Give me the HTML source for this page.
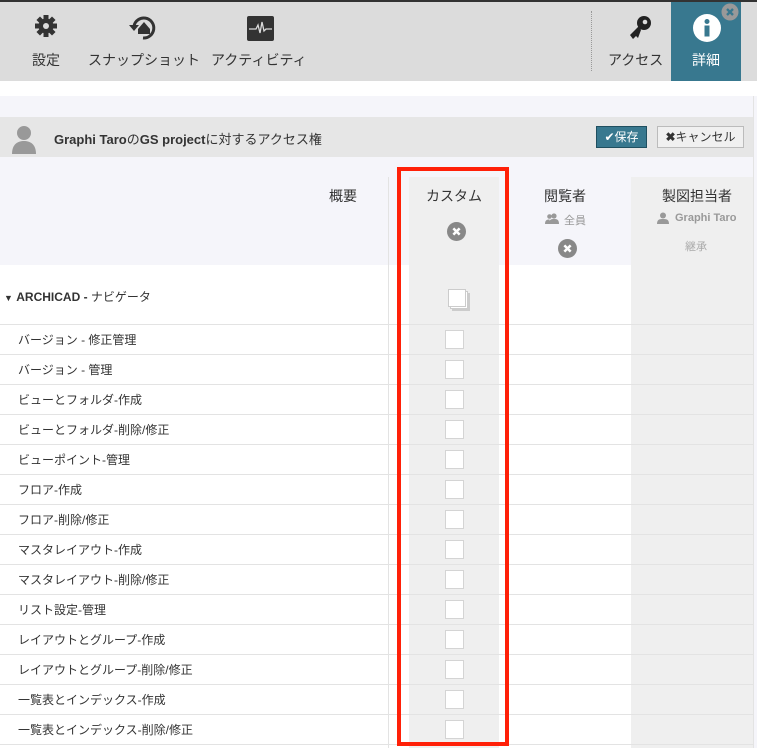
<!DOCTYPE html>
<html><head><meta charset="utf-8"><style>
*{margin:0;padding:0;box-sizing:border-box}
body{width:757px;height:748px;overflow:hidden;background:#fff;font-family:"Liberation Sans","Noto Sans CJK JP",sans-serif;position:relative;color:#333}
.a{position:absolute}
.tb{left:0;top:0;width:757px;height:81px;background:#dcdcdc;border-top:2px solid #333}
.lbl{font-size:14px;color:#333;top:50px;white-space:nowrap}
.row{left:0;width:753px;height:30px;border-bottom:1px solid #e3e3e3}
.row span{position:absolute;left:18px;top:6px;font-size:12px;color:#333}
.cb{position:absolute;left:445px;top:5px;width:19px;height:19px;background:#fff;border:1px solid #d4d4d4}
</style></head><body>
<div class="a tb"></div>
<svg class="a" style="left:34px;top:14px" width="24" height="24" viewBox="0 0 24 24"><g fill="#333"><circle cx="12" cy="12" r="7.5"/><g id="t"><rect x="9.5" y="1" width="5" height="5"/><rect x="9.5" y="18" width="5" height="5"/></g><use href="#t" transform="rotate(45 12 12)"/><use href="#t" transform="rotate(90 12 12)"/><use href="#t" transform="rotate(135 12 12)"/></g><circle cx="12" cy="12" r="3" fill="#dcdcdc"/></svg>
<div class="a lbl" style="left:32px">設定</div>
<svg class="a" style="left:128px;top:12px" width="32" height="32" viewBox="0 0 32 32"><path d="M6 14 A10 10 0 1 1 15 26" fill="none" stroke="#333" stroke-width="3"/><path d="M1 13 L11 13 L6 19Z" fill="#333"/><path d="M10 17 L16 10 L22 17 L22 22 L10 22Z" fill="#333"/></svg>
<div class="a lbl" style="left:88px">スナップショット</div>
<svg class="a" style="left:247px;top:16px" width="27" height="25" viewBox="0 0 27 25"><rect width="27" height="25" rx="2" fill="#333"/><path d="M2 13 H9 L11 9 L13 17 L15 6 L17 15 L19 13 H25" fill="none" stroke="#dcdcdc" stroke-width="1.3"/></svg>
<div class="a lbl" style="left:211px">アクティビティ</div>
<div class="a" style="left:591px;top:11px;height:60px;border-left:1px dotted #999"></div>
<svg class="a" style="left:624px;top:14px" width="30" height="30" viewBox="0 0 30 30"><circle cx="20" cy="9" r="7" fill="#222"/><circle cx="21" cy="8" r="2.3" fill="#dcdcdc"/><path d="M15 12 L6 21 L9 25 L12 22 L14 24 L17 16Z" fill="#222"/></svg>
<div class="a lbl" style="left:608px">アクセス</div>
<div class="a" style="left:671px;top:2px;width:70px;height:79px;background:#38788f"></div>
<svg class="a" style="left:692px;top:13px" width="30" height="30" viewBox="0 0 30 30"><circle cx="15" cy="15" r="14" fill="#fff"/><circle cx="15" cy="8.5" r="2.5" fill="#38788f"/><rect x="12.5" y="12.5" width="5" height="11" fill="#38788f"/></svg>
<div class="a lbl" style="left:692px;color:#fff">詳細</div>
<svg class="a" style="left:721px;top:3px" width="18" height="18" viewBox="0 0 18 18"><circle cx="9" cy="9" r="8.5" fill="#999"/><path d="M6 6 L12 12 M12 6 L6 12" stroke="#38788f" stroke-width="2.4"/></svg>
<div class="a" style="left:0;top:96px;width:753px;height:21px;background:#f5f5fa"></div>
<div class="a" style="left:0;top:117px;width:753px;height:40px;background:#e6e6e6"></div>
<svg class="a" style="left:10px;top:124px" width="28" height="30" viewBox="0 0 28 30"><circle cx="14" cy="9" r="7" fill="#999"/><path d="M2 30 C2 20 8 17 14 17 C20 17 26 20 26 30Z" fill="#999"/></svg>
<div class="a" style="left:54px;top:129px;font-size:13px;color:#333"><b>Graphi Taro</b>の<b>GS project</b>に対するアクセス権</div>
<div class="a" style="left:596px;top:126px;width:51px;height:22px;background:#38788f;border:1px solid #1f4f60;color:#fff;font-size:12px;line-height:20px;text-align:center">✔保存</div>
<div class="a" style="left:657px;top:126px;width:87px;height:22px;background:#f0f0f0;border:1px solid #bbb;color:#333;font-size:12px;line-height:20px;text-align:center"><b>✖</b>キャンセル</div>
<div class="a" style="left:0;top:157px;width:753px;height:108px;background:#f5f5fa"></div>
<div class="a" style="left:409px;top:177px;width:90px;height:571px;background:#efefef"></div>
<div class="a" style="left:631px;top:177px;width:122px;height:571px;background:#efefef"></div>
<div class="a" style="left:388px;top:177px;height:571px;border-left:1px solid #e3e3e3"></div>
<div class="a" style="left:753px;top:96px;width:4px;height:652px;background:#f5f5fa;border-left:1px solid #e3e3e3"></div>
<div class="a" style="left:329px;top:186px;font-size:14px">概要</div>
<div class="a" style="left:426px;top:186px;font-size:14px">カスタム</div>
<svg class="a" style="left:447px;top:222px" width="19" height="19" viewBox="0 0 18 18"><circle cx="9" cy="9" r="9" fill="#888"/><path d="M6 6 L12 12 M12 6 L6 12" stroke="#fff" stroke-width="2.4"/></svg>
<div class="a" style="left:544px;top:186px;font-size:14px">閲覧者</div>
<svg class="a" style="left:545px;top:213px" width="14" height="11" viewBox="0 0 14 11"><circle cx="9" cy="3" r="2.6" fill="#999"/><path d="M4 11 C4 6.5 6 6 9 6 C12 6 14 6.5 14 11Z" fill="#999"/><circle cx="4.5" cy="3.5" r="2.3" fill="#999"/><path d="M0 11 C0 7 2 6.5 4.5 6.5 L5 11Z" fill="#999"/></svg>
<div class="a" style="left:564px;top:212px;font-size:11px;color:#999">全員</div>
<svg class="a" style="left:558px;top:239px" width="19" height="19" viewBox="0 0 18 18"><circle cx="9" cy="9" r="9" fill="#888"/><path d="M6 6 L12 12 M12 6 L6 12" stroke="#fff" stroke-width="2.4"/></svg>
<div class="a" style="left:662px;top:186px;font-size:14px">製図担当者</div>
<svg class="a" style="left:657px;top:212px" width="12" height="12" viewBox="0 0 12 12"><circle cx="6" cy="3.5" r="3" fill="#999"/><path d="M0 12 C0 7 3 7 6 7 C9 7 12 7 12 12Z" fill="#999"/></svg>
<div class="a" style="left:675px;top:212px;font-size:11px;color:#999;font-weight:bold">Graphi Taro</div>
<div class="a" style="left:685px;top:238px;font-size:11px;color:#aaa">継承</div>
<div class="a row" style="top:265px;height:60px"><span style="left:4px;top:23px"><span style="position:static;font-size:9px">▼</span> <b>ARCHICAD -</b> ナビゲータ</span>
<div class="a" style="left:448px;top:24px;width:18px;height:18px;border:1px solid #ccc;background:#fff;box-shadow:2px 2px 0 -1px #fff,2px 2px 0 0 #ccc,3px 3px 0 -1px #fff,4px 4px 0 0 #ccc"></div></div>
<div class="a row" style="top:325px"><span>バージョン - 修正管理</span><i class="cb"></i></div>
<div class="a row" style="top:355px"><span>バージョン - 管理</span><i class="cb"></i></div>
<div class="a row" style="top:385px"><span>ビューとフォルダ-作成</span><i class="cb"></i></div>
<div class="a row" style="top:415px"><span>ビューとフォルダ-削除/修正</span><i class="cb"></i></div>
<div class="a row" style="top:445px"><span>ビューポイント-管理</span><i class="cb"></i></div>
<div class="a row" style="top:475px"><span>フロア-作成</span><i class="cb"></i></div>
<div class="a row" style="top:505px"><span>フロア-削除/修正</span><i class="cb"></i></div>
<div class="a row" style="top:535px"><span>マスタレイアウト-作成</span><i class="cb"></i></div>
<div class="a row" style="top:565px"><span>マスタレイアウト-削除/修正</span><i class="cb"></i></div>
<div class="a row" style="top:595px"><span>リスト設定-管理</span><i class="cb"></i></div>
<div class="a row" style="top:625px"><span>レイアウトとグループ-作成</span><i class="cb"></i></div>
<div class="a row" style="top:655px"><span>レイアウトとグループ-削除/修正</span><i class="cb"></i></div>
<div class="a row" style="top:685px"><span>一覧表とインデックス-作成</span><i class="cb"></i></div>
<div class="a row" style="top:715px"><span>一覧表とインデックス-削除/修正</span><i class="cb"></i></div>
<div class="a" style="left:397px;top:167px;width:112px;height:579px;border:4px solid #ff2008"></div>
</body></html>
